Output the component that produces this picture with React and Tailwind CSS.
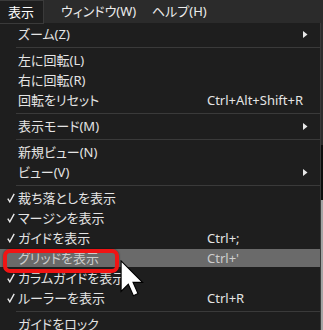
import React from "react";

const font = "font-['Noto_Sans','Noto_Sans_CJK_JP',sans-serif] [font-feature-settings:'palt']";

function Check() {
  return (
    <svg width="8" height="10" viewBox="0 0 8 10" className="block">
      <path d="M0.8 5.6 L2.8 8.8 L7.2 0.8" fill="none" stroke="#e8e8e8" strokeWidth="1.4" />
    </svg>
  );
}

function Arrow() {
  return (
    <svg width="5" height="7" viewBox="0 0 5 7" className="block">
      <path d="M0 0 L4.5 3.5 L0 7 Z" fill="#e8e8e8" />
    </svg>
  );
}

function Row({ label, shortcut, checked, sub, hl }) {
  return (
    <div className="h-5 flex items-center">
      <div
        className={
          "h-[18px] w-full flex items-center " +
          (hl ? "bg-[#6a6a6a] text-[#cdcdcd]" : "text-[#e4e4e4]")
        }
      >
        <div className="w-[18px] pl-[7px] flex items-center">{checked ? <Check /> : null}</div>
        <div className="w-[189px] whitespace-nowrap leading-none">{label}</div>
        <div className="flex-1 whitespace-nowrap leading-none">{shortcut}</div>
        <div className="w-[17px] flex items-center">{sub ? <Arrow /> : null}</div>
      </div>
    </div>
  );
}

function Sep() {
  return (
    <div className="h-[6px] pt-[3px] pl-4">
      <div className="h-px bg-[#3a3a3a]" />
    </div>
  );
}

export default function App() {
  return (
    <div className={"relative w-[323px] h-[330px] overflow-hidden bg-[#1e1e1e] text-[13px] " + font}>
      {/* menu bar */}
      <div className="h-6 flex items-stretch bg-[#2b2b2b] text-[#ececec]">
        <div className="w-[44px] pl-[8px] flex items-center bg-[#1e1e1e] border-r border-t border-[#3a3a3a] text-white">
          表示
        </div>
        <div className="ml-[17px] w-[91px] flex items-center">ウィンドウ(W)</div>
        <div className="flex items-center">ヘルプ(H)</div>
      </div>
      <div className="flex">
        {/* dropdown */}
        <div className="w-[321px] border-r border-t border-[#3a3a3a] bg-[#1e1e1e] -mt-px">
          <div className="ml-[44px] -mt-px h-px bg-[#1e1e1e]" />
          <Row label="ズーム(Z)" sub />
          <Sep />
          <Row label="左に回転(L)" />
          <Row label="右に回転(R)" />
          <Row label="回転をリセット" shortcut="Ctrl+Alt+Shift+R" />
          <Sep />
          <Row label="表示モード(M)" sub />
          <Sep />
          <Row label="新規ビュー(N)" />
          <Row label="ビュー(V)" sub />
          <Sep />
          <Row label="裁ち落としを表示" checked />
          <Row label="マージンを表示" checked />
          <Row label="ガイドを表示" shortcut="Ctrl+;" checked />
          <Row label="グリッドを表示" shortcut="Ctrl+'" hl />
          <Row label="カラムガイドを表示" checked />
          <Row label="ルーラーを表示" shortcut="Ctrl+R" checked />
          <Sep />
          <Row label="ガイドをロック" />
        </div>
        {/* right strip */}
        <div className="flex-1 flex flex-col">
          <div className="h-[121px] bg-[#2c2c2c]" />
          <div className="h-[55px] bg-[#0e0e0e]" />
          <div className="flex-1 bg-[#a4a4a4]" />
        </div>
      </div>

      {/* red annotation box */}
      <div className="absolute left-[3px] top-[249px] w-[116px] h-[24px] border-[4px] border-[#f01414] rounded-[7px] shadow-[0_0_2px_rgba(0,0,0,0.6)]" />

      {/* mouse cursor */}
      <svg
        className="absolute left-[120px] top-[260px]"
        width="24"
        height="37"
        viewBox="0 0 12.5 19.5"
      >
        <path
          d="M0.5 0.5 L0.5 16.5 L4.3 12.8 L7 18.8 L9.4 17.7 L6.8 11.8 L11.8 11.8 Z"
          fill="#ffffff"
          stroke="#000000"
          strokeWidth="0.6"
          strokeLinejoin="miter"
        />
      </svg>
    </div>
  );
}
